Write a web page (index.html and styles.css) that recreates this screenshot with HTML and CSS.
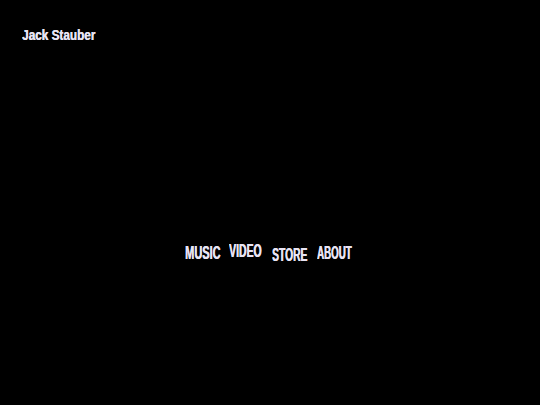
FILE: index.html
```html
<!DOCTYPE html>
<html>
<head>
<meta charset="utf-8">
<link rel="stylesheet" href="styles.css">
</head>
<body>
<div class="page">
  <header class="brand"><span class="brand-text">Jack Stauber</span></header>
  <nav class="nav">
    <a class="item music" href="#"><span class="label">MUSIC</span></a>
    <a class="item video" href="#"><span class="label">VIDEO</span></a>
    <a class="item store" href="#"><span class="label">STORE</span></a>
    <a class="item about" href="#"><span class="label">ABOUT</span></a>
  </nav>
</div>
</body>
</html>
```
FILE: styles.css
```css
html, body {
  margin: 0;
  padding: 0;
  background: #000;
}
.page {
  width: 540px;
  height: 405px;
  background: #000;
  color: #e8e4f4;
  font-family: "Liberation Sans", Arial, sans-serif;
  font-weight: bold;
  display: flex;
  flex-direction: column;
}
.brand {
  padding: 27px 0 0 22px;
  height: 16px;
  font-size: 14px;
  line-height: 16px;
}
.brand-text {
  display: inline-block;
  white-space: nowrap;
  transform: scaleX(0.84);
  transform-origin: left top;
  text-shadow: 0.4px 0 0 #e8e4f4;
}
.nav {
  display: flex;
  justify-content: center;
  align-items: flex-start;
  margin-top: 199px;
  padding-right: 3px;
}
.item {
  display: block;
  color: #e8e4f4;
  text-decoration: none;
  font-size: 18px;
  line-height: 18px;
  height: 18px;
}
.label {
  display: inline-block;
  white-space: nowrap;
  transform-origin: left top;
  text-shadow: 0.6px 0 0 #e8e4f4;
}
.music { width: 36px; margin-top: 2px; margin-right: 8px; }
.music .label { transform: scaleX(0.61); }
.video { width: 33px; margin-top: 0; margin-right: 10px; }
.video .label { transform: scaleX(0.58); }
.store { width: 36px; margin-top: 4px; margin-right: 9px; }
.store .label { transform: scaleX(0.57); }
.about { width: 35px; margin-top: 2px; }
.about .label { transform: scaleX(0.54); }
```
